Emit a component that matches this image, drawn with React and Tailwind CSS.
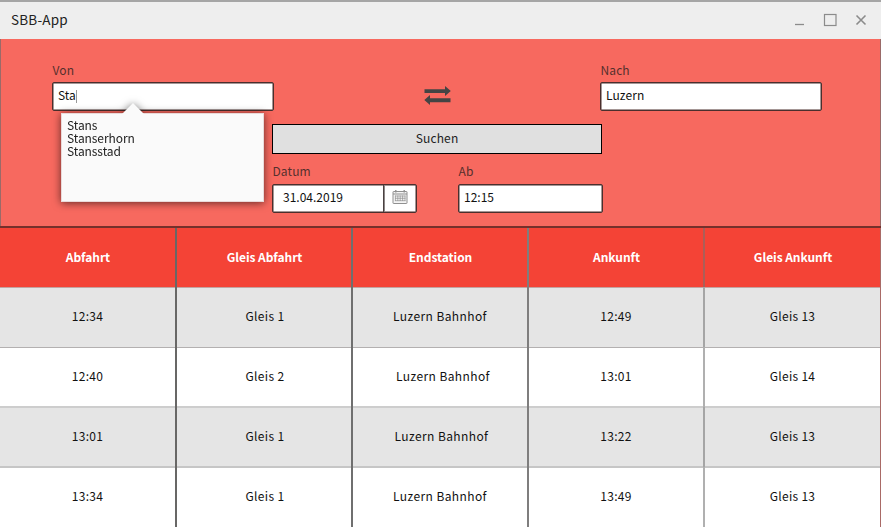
import React from "react";

const columns = ["Abfahrt", "Gleis Abfahrt", "Endstation", "Ankunft", "Gleis Ankunft"];

const rows = [
  { cells: ["12:34", "Gleis 1", "Luzern Bahnhof", "12:49", "Gleis 13"], shaded: true, shift: "", line: "shadow-[inset_0_1px_0_#c3a3a1]" },
  { cells: ["12:40", "Gleis 2", "Luzern Bahnhof", "13:01", "Gleis 14"], shaded: false, shift: "pl-[6px]", line: "shadow-[inset_0_1px_0_#b3b0b0,inset_0_-1px_0_#cdcdcd]" },
  { cells: ["13:01", "Gleis 1", "Luzern Bahnhof", "13:22", "Gleis 13"], shaded: true, shift: "pl-[3px]", line: "shadow-[inset_0_1px_0_#cdcdcd,inset_0_-1px_0_#c6c6c6]" },
  { cells: ["13:34", "Gleis 1", "Luzern Bahnhof", "13:49", "Gleis 13"], shaded: false, shift: "", line: "shadow-[inset_0_1px_0_#c6c6c6]" },
];

const dividers = [
  "border-r-2 border-[#686766]",
  "border-r-2 border-[#6f6f6f]",
  "border-r-2 border-[#7f7e7e]",
  "border-r-2 border-[#73737390]",
  "border-r border-[#a96a66]",
];

function TitleBar() {
  return (
    <header className="flex h-[39px] items-center justify-between border-t-2 border-[#a5a5a5] bg-[#eeeeee] pl-[11px] pr-[14px]">
      <h1 className="pb-[3px] text-[13.5px] leading-[20px] tracking-[0.2px] text-[#222]">SBB-App</h1>
      <div className="flex items-center gap-[18px] pb-[2px] text-[#8b8b8b]">
        <svg width="14" height="14" viewBox="0 0 14 14" fill="none" stroke="currentColor">
          <path d="M4 11.5h9" strokeWidth="1.3" />
        </svg>
        <svg width="14" height="14" viewBox="0 0 14 14" fill="none" stroke="currentColor">
          <rect x="1.5" y="1.5" width="11.5" height="11" strokeWidth="1.2" />
        </svg>
        <svg width="12" height="14" viewBox="0 0 12 14" fill="none" stroke="currentColor">
          <path d="M1.5 2.5l9 9M10.5 2.5l-9 9" strokeWidth="1.6" />
        </svg>
      </div>
    </header>
  );
}

function Field({ label, width, children }) {
  return (
    <div className={width}>
      <div className="h-[22px] pl-[0.5px] text-[12px] leading-[20px] tracking-[0.1px] text-[#55302d]">{label}</div>
      {children}
    </div>
  );
}

const box = "h-[29px] rounded-[2px] border border-[#4a2f2d] bg-white text-[12px] leading-[20px] text-[#111] shadow-[inset_0_0_0_0.5px_#4a2f2d]";

function Suggestions() {
  return (
    <div className="absolute left-[9px] top-[53px] h-[89px] w-[203px] drop-shadow-[0_1px_4px_rgba(0,0,0,0.6)]">
      <svg className="absolute left-[61px] top-[-10px]" width="22" height="11" viewBox="0 0 22 11">
        <path d="M0 11L11 0l11 11z" fill="#fafafa" />
      </svg>
      <div className="h-full border border-[#e9dada] bg-[#fafafa] pl-[5px] pt-[4px] text-[12px] leading-[13px] tracking-[-0.08px] text-[#222]">
        Stans
        <br />
        Stanserhorn
        <br />
        Stansstad
      </div>
    </div>
  );
}

function CalendarIcon() {
  return (
    <svg width="16" height="16" viewBox="0 0 16 16" fill="none" stroke="#909090">
      <rect x="1" y="2.5" width="14" height="12" rx="0.5" fill="#f4f4f4" />
      <path d="M1 5h14" strokeWidth="1" />
      <path d="M3.8 1v2.5M12.2 1v2.5" strokeWidth="1.4" />
      <path d="M3 7h10.5M3 9.3h10.5M3 11.7h10.5M3.4 6.5v5.5M5.8 6.5v5.5M8.2 6.5v5.5M10.6 6.5v5.5M13 6.5v5.5" strokeWidth="0.7" />
    </svg>
  );
}

function SearchPanel() {
  return (
    <section className="h-[187px] border-x border-[#9a6a68] bg-[#f7695f] pt-[21px]">
      <div className="flex items-start pl-[51px]">
        <div className="relative">
          <Field label="Von" width="w-[222px]">
            <div className={"flex items-center pb-[3px] pl-[5px] " + box}>
              <span>Sta</span>
              <span className="mt-[3px] h-[13px] w-px bg-[#999]" />
            </div>
          </Field>
          <Suggestions />
        </div>
        <svg className="ml-[150px] mt-[26px]" width="27" height="19" viewBox="0 0 27 19" fill="#444">
          <path d="M0.5 3.2h20.5V0l5.8 5-5.8 5V7H0.5zM26.5 16.2H6V19L0.3 14l5.7-5v3.2h20.5z" />
        </svg>
        <div className="ml-[149px]">
          <Field label="Nach" width="w-[222px]">
            <div className={"flex items-center pb-[3px] pl-[5px] tracking-[0.1px] " + box}>Luzern</div>
          </Field>
        </div>
      </div>
      <button className="ml-[271px] mt-[13px] block h-[30px] w-[330px] border border-black bg-[#e0e0e0] pb-[3px] text-[12px] leading-[25px] tracking-[0.15px] text-[#222]">
        Suchen
      </button>
      <div className="flex gap-[41px] pl-[271px] pt-[7px]">
        <Field label="Datum" width="w-[145px]">
          <div className={"mt-px flex " + box}>
            <div className="flex w-[111px] items-center border-r border-[#4a4141] pb-[3px] pl-[10px] shadow-[1px_0_0_#8d8888]">31.04.2019</div>
            <div className="flex flex-1 items-center justify-center pb-[3px]">
              <CalendarIcon />
            </div>
          </div>
        </Field>
        <Field label="Ab" width="w-[145px]">
          <div className={"mt-px flex items-center pb-[3px] pl-[5px] " + box}>12:15</div>
        </Field>
      </div>
    </section>
  );
}

function Connections() {
  return (
    <table className="w-[881px] table-fixed border-separate border-spacing-0 border-t-2 border-[#75302b] text-center">
      <colgroup>
        <col className="w-[177px]" />
        <col className="w-[176px]" />
        <col className="w-[176px]" />
        <col className="w-[176px]" />
        <col className="w-[176px]" />
      </colgroup>
      <thead>
        <tr className="h-[59px] bg-[#f44336] text-[12px] text-white">
          {columns.map((name, i) => (
            <th key={name} className={"p-0 pb-px pl-px font-bold leading-[18px] tracking-[-0.05px] " + dividers[i]}>{name}</th>
          ))}
        </tr>
      </thead>
      <tbody>
        {rows.map((row) => (
          <tr key={row.cells[0]} className={"h-[60px] text-[12px] text-[#111] " + (row.shaded ? "bg-[#e5e5e5]" : "bg-white")}>
            {row.cells.map((cell, i) => (
              <td key={i} className={"p-0 pb-[2px] leading-[18px] " + row.line + " " + dividers[i] + (i === 2 ? " tracking-[0.4px] " + row.shift : i === 1 ? " tracking-[0.35px] pl-[2px]" : " tracking-[0.3px]")}>
                {cell}
              </td>
            ))}
          </tr>
        ))}
      </tbody>
    </table>
  );
}

export default function App() {
  return (
    <main className="h-[527px] w-[881px] overflow-hidden bg-white font-['Noto_Sans_CJK_SC','Noto_Sans',sans-serif]">
      <TitleBar />
      <SearchPanel />
      <Connections />
    </main>
  );
}
